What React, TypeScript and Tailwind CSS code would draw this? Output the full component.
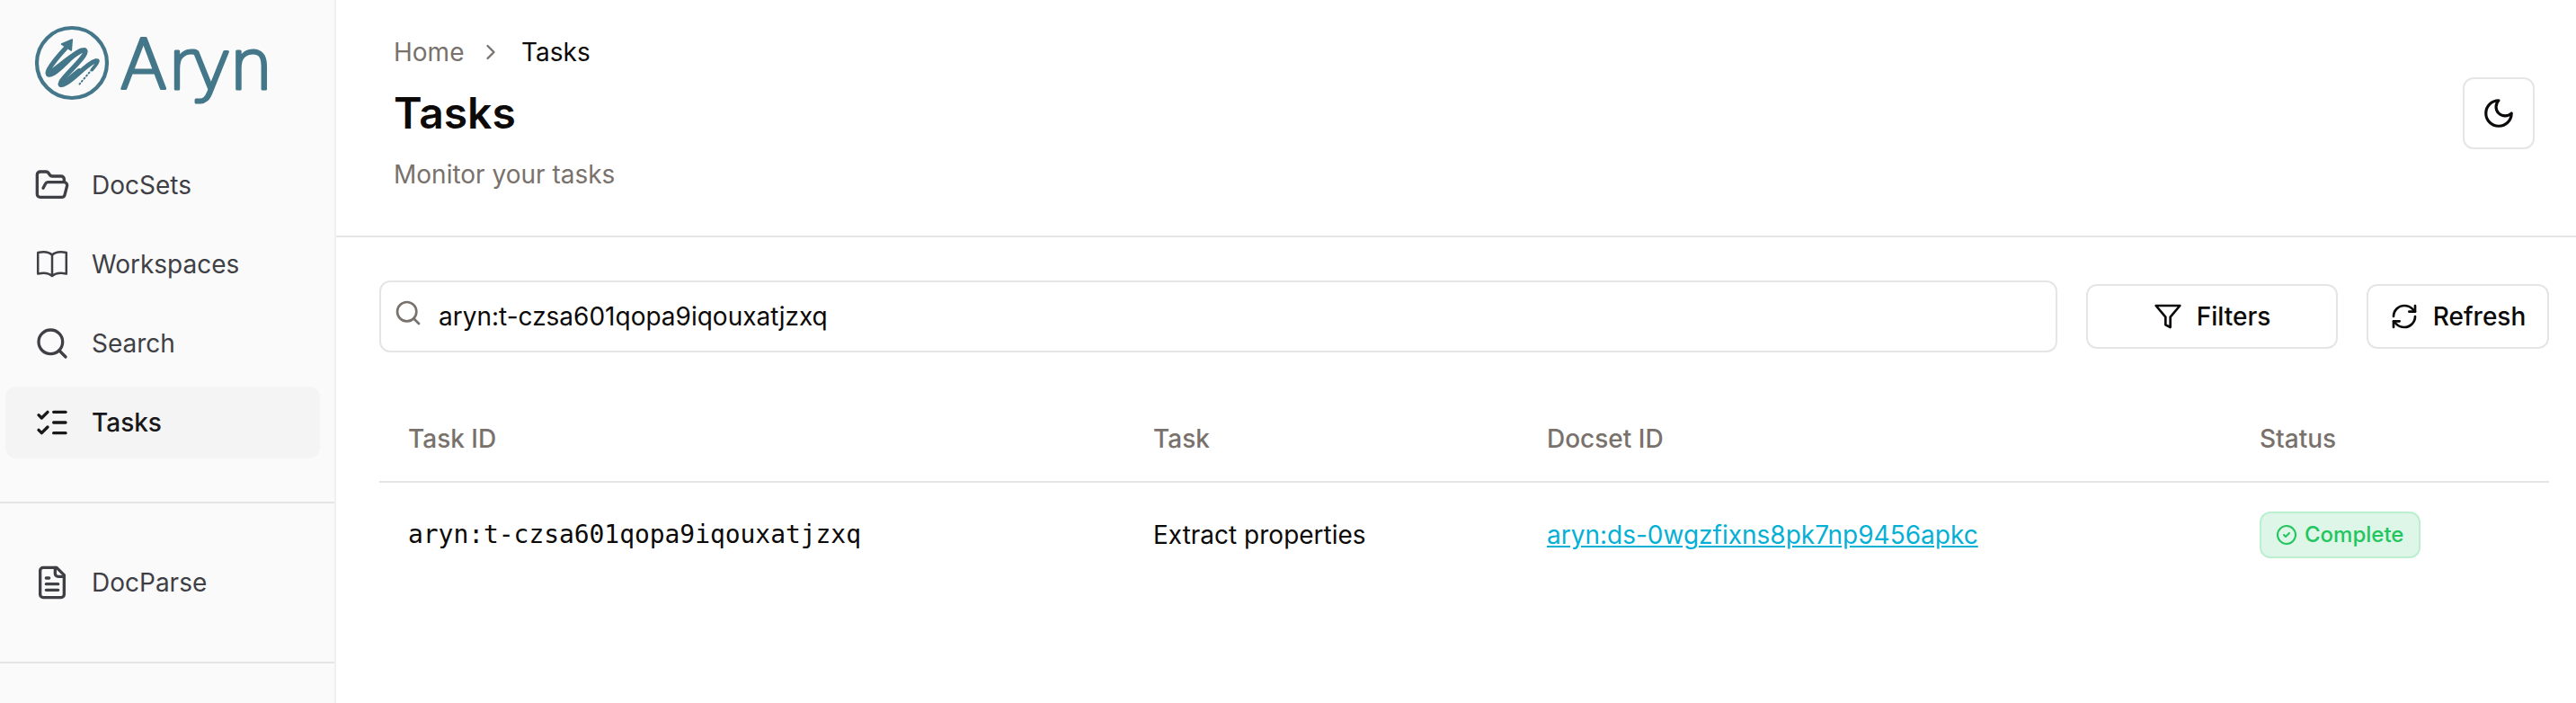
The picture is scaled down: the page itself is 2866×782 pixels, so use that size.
import React from "react";
import { ChevronRight, CircleCheck, ListChecks, RefreshCw, Search } from "lucide-react";

function Icon({ children, className = "" }: { children: React.ReactNode; className?: string }) {
  return (
    <svg viewBox="0 0 24 24" fill="none" stroke="currentColor" strokeWidth="2" strokeLinecap="round" strokeLinejoin="round" className={`shrink-0 ${className}`}>
      {children}
    </svg>
  );
}

const FolderOpenIcon = () => (
  <Icon className="size-10">
    <path d="m6 14 1.5-2.9A2 2 0 0 1 9.24 10H20a2 2 0 0 1 1.94 2.5l-1.54 6a2 2 0 0 1-1.95 1.5H4a2 2 0 0 1-2-2V5a2 2 0 0 1 2-2h3.9a2 2 0 0 1 1.69.9l.81 1.2a2 2 0 0 0 1.67.9H18a2 2 0 0 1 2 2v2" />
  </Icon>
);

const BookIcon = () => (
  <svg viewBox="0 0 40 40" fill="none" stroke="currentColor" strokeWidth="2.5" strokeLinejoin="round" className="size-10 shrink-0">
    <path d="M20 9.5C16 5.8 9.5 5.7 4.2 7v23.6C9.5 29.3 16 29.4 20 33c4-3.6 10.5-3.7 15.8-2.4V7C30.5 5.7 24 5.8 20 9.5Z" />
    <path d="M20 9.5V33" />
  </svg>
);

const FileIcon = () => (
  <Icon className="size-10">
    <path d="M15 2H6a2 2 0 0 0-2 2v16a2 2 0 0 0 2 2h12a2 2 0 0 0 2-2V7Z" />
    <path d="M14 2v4a2 2 0 0 0 2 2h4" />
    <path d="M10 9H8M16 13H8M16 17H8" />
  </Icon>
);

const MoonIcon = () => (
  <Icon className="size-[38px]">
    <path d="M12 3a6 6 0 0 0 9 9 9 9 0 1 1-9-9Z" />
  </Icon>
);

const FilterIcon = () => (
  <Icon className="size-8">
    <path d="M22 3H2l8 9.46V19l4 2v-8.54Z" />
  </Icon>
);

function Logo() {
  return (
    <svg width="280" height="110" viewBox="30 20 280 110" fill="none" stroke="#437789" strokeLinecap="round" strokeLinejoin="round" className="shrink-0">
      <circle cx="80" cy="70" r="39" strokeWidth="4.2" />
      <path d="M80.3 44 68.5 49 79.3 56Z" fill="#437789" strokeWidth="1.5" />
      <path
        d="M73.5 53C67 60 59 69 54.5 77C51.5 83 53.5 85 59.5 81.5C70 75 79 62 89 57C95 54 97 56 93 62C88 70 71 85 68 91C66 95.5 69 95 73.5 92.5C84 87 96 71 106 68"
        strokeWidth="5.2"
      />
      <path d="M53.8 81.5C60 80 74 65 90 56.5M67.5 94C74 92 79 86 88 79" strokeWidth="5.8" />
      <path d="M98 72.5C104 68 110 65 108.8 68.5C108 71.5 105 74 102.5 77.5" strokeWidth="3.6" />
      <path d="M102 77.5 88.5 93.5" strokeWidth="2" strokeDasharray="1.2 2.8" />
      <text y="98.5" x="133.5 186.5 212 255" fontSize="77" fontWeight="200" fill="#437789" strokeWidth="3" className="font-['DejaVu_Sans',sans-serif]">
        Aryn
      </text>
    </svg>
  );
}

function NavItem({ icon, label, active = false }: { icon: React.ReactNode; label: string; active?: boolean }) {
  return (
    <a className={`flex h-20 items-center gap-6 rounded-xl px-8 ${active ? "bg-[#f4f4f4] font-medium text-[#18181b]" : "text-[#3f3f46]"}`}>
      {icon}
      <span>{label}</span>
    </a>
  );
}

function Sidebar() {
  return (
    <aside className="flex w-[374px] shrink-0 flex-col border-r-2 border-[#f0f0f0] bg-[#fafafa]">
      <div className="flex h-[166px] pt-5 pl-[30px]">
        <Logo />
      </div>
      <nav className="flex h-[394px] flex-col gap-2 border-b-2 border-[#e5e5e5] pr-4 pl-1.5">
        <NavItem icon={<FolderOpenIcon />} label="DocSets" />
        <NavItem icon={<BookIcon />} label="Workspaces" />
        <NavItem icon={<Search className="size-10" />} label="Search" />
        <NavItem icon={<ListChecks className="size-10" />} label="Tasks" active />
      </nav>
      <nav className="flex h-[178px] flex-col border-b-2 border-[#e5e5e5] pt-12 pr-4 pl-1.5">
        <NavItem icon={<FileIcon />} label="DocParse" />
      </nav>
    </aside>
  );
}

function Header() {
  return (
    <header className="flex h-[264px] shrink-0 items-start justify-between border-b-2 border-[#e5e5e5] pr-[46px] pl-16">
      <div className="flex flex-col pt-[38px]">
        <div className="flex h-10 items-center">
          <span className="w-[94px] text-[#78716c]">Home</span>
          <ChevronRight className="size-7 text-[#78716c]" />
          <span className="pl-5">Tasks</span>
        </div>
        <h1 className="mt-4 text-[48px] leading-[64px] font-semibold">Tasks</h1>
        <p className="mt-4 leading-10 text-[#78716c]">Monitor your tasks</p>
      </div>
      <button className="mt-[86px] flex size-20 items-center justify-center rounded-xl border-2 border-[#e5e5e5]">
        <MoonIcon />
      </button>
    </header>
  );
}

function Toolbar() {
  return (
    <div className="flex items-center gap-8">
      <div className="flex h-20 w-[1867px] items-center rounded-xl border-2 border-[#e5e5e5] pl-3.5">
        <Search className="-mt-2 size-8 text-[#78716c]" />
        <span className="pl-[18px]">aryn:t-czsa601qopa9iqouxatjzxq</span>
      </div>
      <button className="flex h-[72px] w-[280px] items-center justify-center gap-4 rounded-xl border-2 border-[#e5e5e5] font-medium">
        <FilterIcon />
        Filters
      </button>
      <button className="flex h-[72px] w-[203px] items-center justify-center gap-4 rounded-xl border-2 border-[#e5e5e5] font-medium">
        <RefreshCw className="size-8 shrink-0" />
        Refresh
      </button>
    </div>
  );
}

function TaskTable() {
  return (
    <table className="mt-12 w-full table-fixed text-left">
      <colgroup>
        <col className="w-[829px]" />
        <col className="w-[438px]" />
        <col className="w-[793px]" />
        <col />
      </colgroup>
      <thead>
        <tr className="h-24 border-b-2 border-[#e5e5e5] text-[#78716c]">
          <th className="px-8 font-medium">Task ID</th>
          <th className="px-8 font-medium">Task</th>
          <th className="px-8 font-medium">Docset ID</th>
          <th className="px-8 font-medium">Status</th>
        </tr>
      </thead>
      <tbody>
        <tr className="h-[117px]">
          <td className="px-8 font-['DejaVu_Sans_Mono',monospace] tracking-[-0.06px]">aryn:t-czsa601qopa9iqouxatjzxq</td>
          <td className="px-8">Extract properties</td>
          <td className="px-8">
            <a className="text-[#06b0d4] underline">aryn:ds-0wgzfixns8pk7np9456apkc</a>
          </td>
          <td className="px-8">
            <div className="flex h-[52px] w-[179px] items-center gap-2 rounded-xl border-2 border-[#bcefcf] bg-[#def6e7] pl-4 text-2xl font-medium text-[#22c55e]">
              <CircleCheck className="size-6 shrink-0" />
              Complete
            </div>
          </td>
        </tr>
      </tbody>
    </table>
  );
}

export default function App() {
  return (
    <div className="flex h-[782px] w-[2866px] overflow-hidden bg-white font-['Inter',sans-serif] text-[28px] leading-10 text-[#0c0a09]">
      <Sidebar />
      <main className="flex min-w-0 flex-1 flex-col">
        <Header />
        <section className="flex flex-col pt-12 pr-[30px] pl-12">
          <Toolbar />
          <TaskTable />
        </section>
      </main>
    </div>
  );
}
